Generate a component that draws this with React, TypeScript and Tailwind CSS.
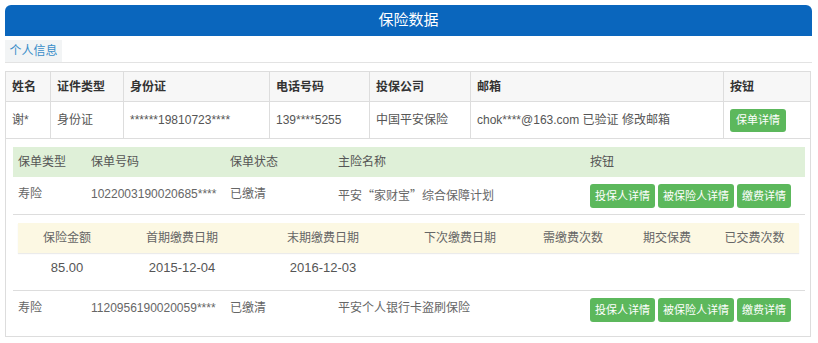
const font = "font-['Liberation_Sans','Noto_Sans_CJK_SC',sans-serif]";

const personCols = "grid grid-cols-[45px_73px_146px_100px_101px_253px_1fr]";
const policyCols = "grid grid-cols-[73px_139px_108px_252px_1fr]";
const payCols = "grid grid-cols-[98px_132px_150px_124px_102px_86px_1fr]";

const personHead = ["姓名", "证件类型", "身份证", "电话号码", "投保公司", "邮箱", "按钮"];
const personRow = ["谢*", "身份证", "******19810723****", "139****5255", "中国平安保险", "chok****@163.com 已验证 修改邮箱"];

const payHead = ["保险金额", "首期缴费日期", "末期缴费日期", "下次缴费日期", "需缴费次数", "期交保费", "已交费次数"];
const payRow = ["85.00", "2015-12-04", "2016-12-03", "", "", "", ""];

const GreenBtn = ({ label }: { label: string }) => (
  <button className="h-6 rounded-[3px] bg-[#5cb85c] px-[5px] text-[11px] leading-6 text-white">{label}</button>
);

const PolicyButtons = () => (
  <div className="flex gap-[3px] pl-[5px]">
    <GreenBtn label="投保人详情" />
    <GreenBtn label="被保险人详情" />
    <GreenBtn label="缴费详情" />
  </div>
);

const PolicyRow = ({ no, name }: { no: string; name: React.ReactNode }) => (
  <div className={`${policyCols} h-[37px] pt-[7px] leading-[17px] text-[#666]`}>
    <div className="pl-[5px] pt-[2px]">寿险</div>
    <div className="pl-[5px] pt-[2px]">{no}</div>
    <div className="pl-[5px] pt-[2px]">已缴清</div>
    <div className="pl-[5px] pt-[2px]">{name}</div>
    <PolicyButtons />
  </div>
);

export default function App() {
  return (
    <div className={`${font} h-[343px] w-[818px] bg-white pt-[5px] text-[12px]`}>
      {/* title */}
      <div className="ml-[5px] flex h-[31px] w-[807px] items-center justify-center rounded-t-[6px] bg-[#0a66bd] text-[15px] text-white">
        保险数据
      </div>

      {/* tab */}
      <div className="ml-[5px] mt-[4px] w-[807px] border-b border-[#e3e3e3]">
        <div className="flex h-[22px] w-[57px] items-center justify-center bg-[#f2f4f5] text-[#3a8ec9]">个人信息</div>
      </div>

      <div className="ml-[5px] mt-[8px] w-[806px] border border-[#dddddd] pb-[8px]">
        {/* person table */}
        <div className={`${personCols} h-[30px] border-b border-[#dddddd] bg-[#f7f7f7] font-bold text-[#333]`}>
          {personHead.map((h, i) => (
            <div key={h} className={`flex items-center pl-[6px] ${i < 6 ? "border-r border-[#dddddd]" : ""}`}>
              {h}
            </div>
          ))}
        </div>
        <div className={`${personCols} h-[37px] border-b border-[#dddddd] text-[#555]`}>
          {personRow.map((c, i) => (
            <div key={i} className="flex items-center border-r border-[#dddddd] pl-[6px]">
              {c}
            </div>
          ))}
          <div className="flex items-center pl-[6px]">
            <button className="h-[23px] rounded-[3px] bg-[#5cb85c] px-[6px] text-[11px] text-white">保单详情</button>
          </div>
        </div>

        {/* policies */}
        <div className="pl-[7px] pr-[5px] pt-[8px]">
          <div className={`${policyCols} h-[30px] items-center bg-[#dff0d8] text-[#555]`}>
            <div className="pl-[5px]">保单类型</div>
            <div className="pl-[5px]">保单号码</div>
            <div className="pl-[5px]">保单状态</div>
            <div className="pl-[5px]">主险名称</div>
            <div className="pl-[5px]">按钮</div>
          </div>

          <div className="border-b border-[#dddddd]">
            <PolicyRow
              no="1022003190020685****"
              name={
                <>
                  平安<span className="font-['Noto_Sans_CJK_SC',sans-serif]">“</span>家财宝
                  <span className="font-['Noto_Sans_CJK_SC',sans-serif]">”</span>综合保障计划
                </>
              }
            />
          </div>

          {/* payment detail */}
          <div className="mb-[7px] ml-[5px] mr-[6px] mt-[8px]">
            <div className={`${payCols} h-[30px] items-center bg-[#fcf8e3] text-center text-[#666] shadow-[0_1px_1px_rgba(0,0,0,0.08)]`}>
              {payHead.map((h) => (
                <div key={h}>{h}</div>
              ))}
            </div>
            <div className={`${payCols} h-[30px] items-center text-center text-[13px] text-[#555]`}>
              {payRow.map((v, i) => (
                <div key={i}>{v}</div>
              ))}
            </div>
          </div>

          <div className="border-t border-[#dddddd]">
            <PolicyRow no="1120956190020059****" name="平安个人银行卡盗刷保险" />
          </div>
        </div>
      </div>
    </div>
  );
}
